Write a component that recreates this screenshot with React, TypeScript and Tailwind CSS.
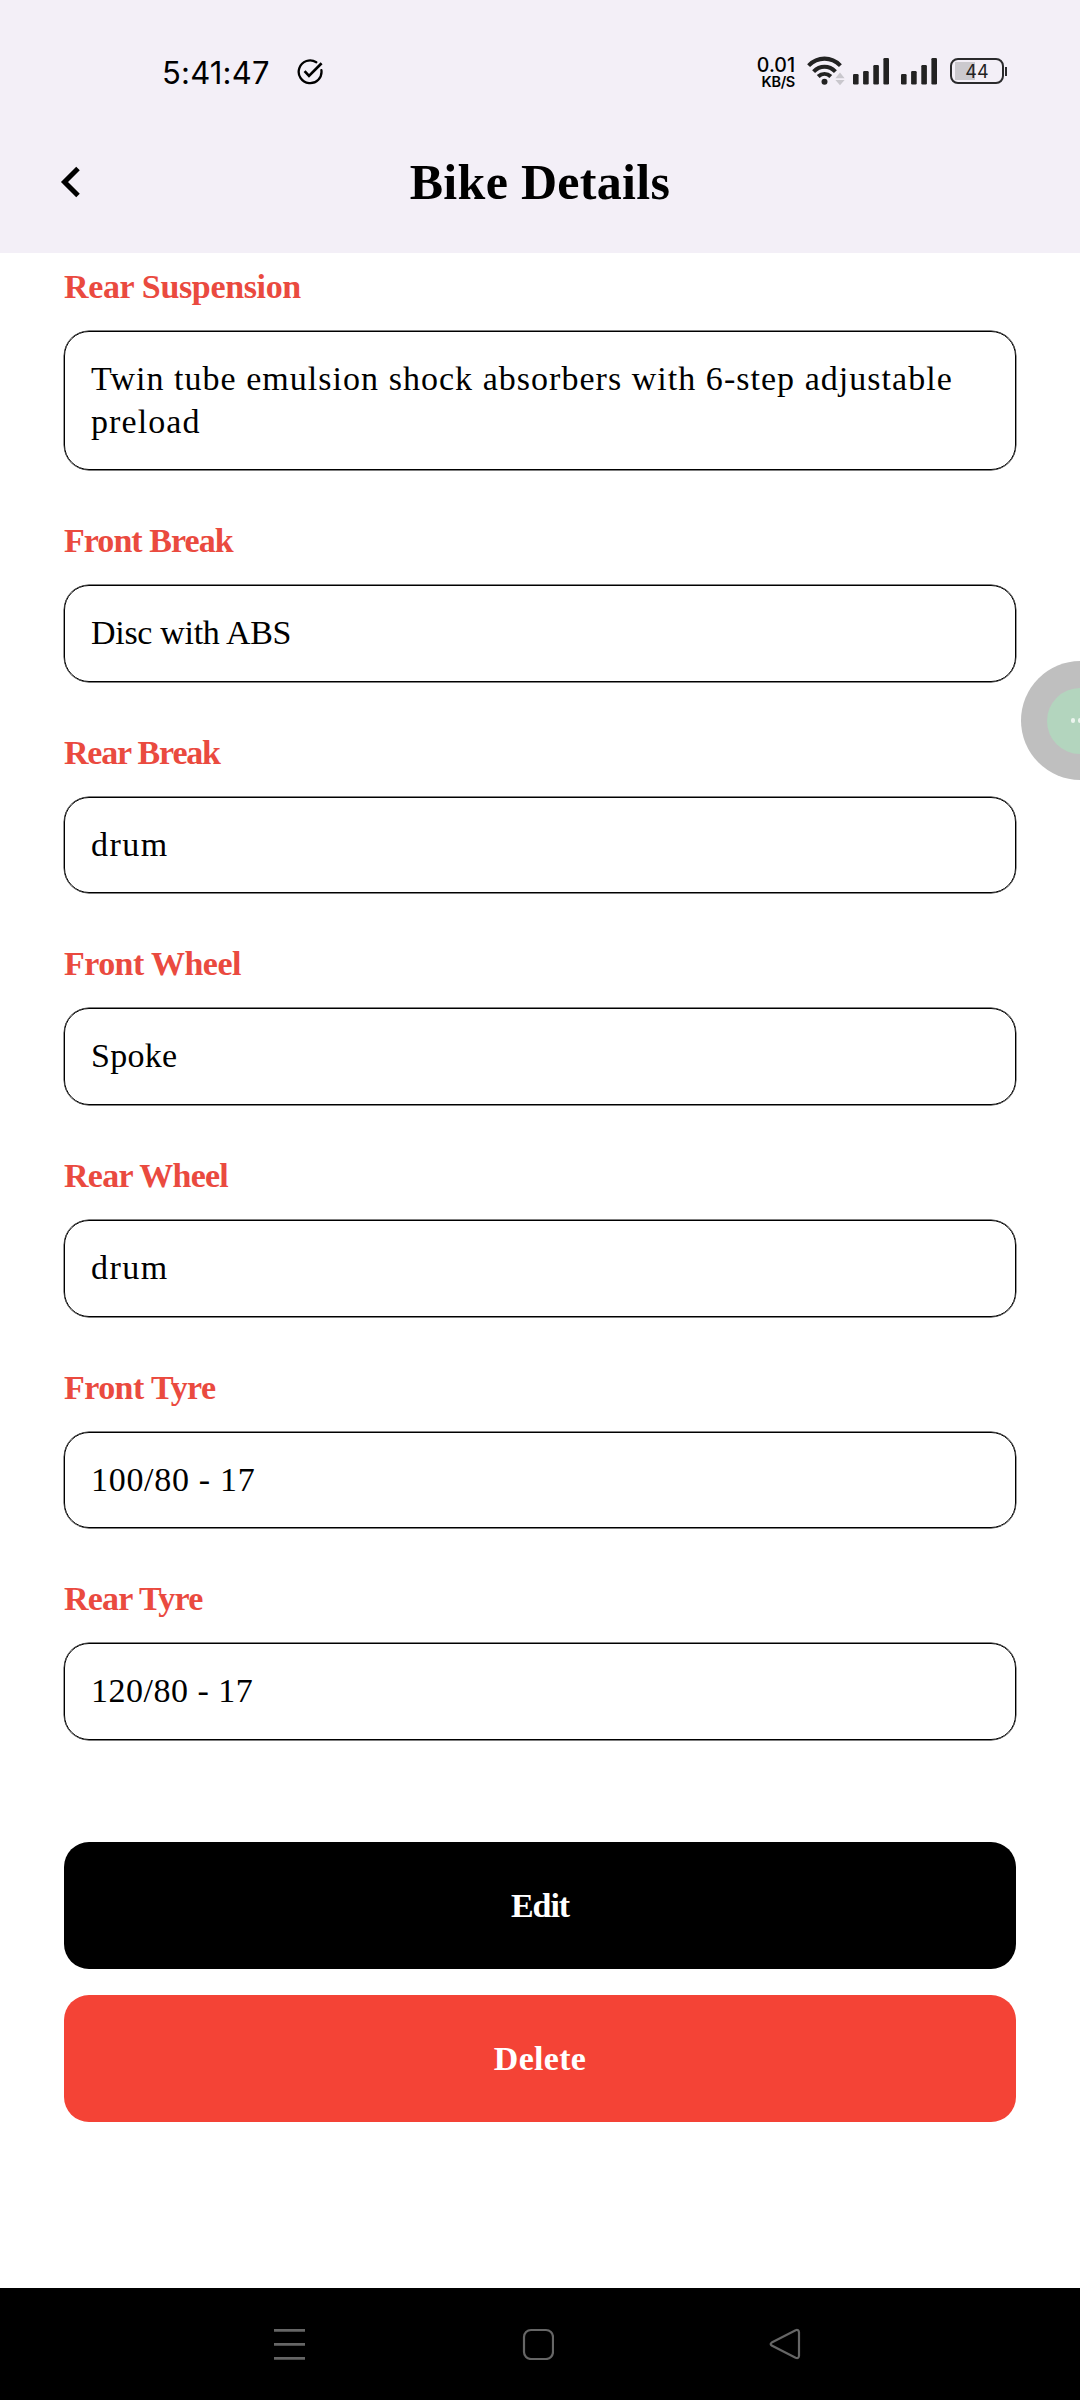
type Line = { text: string; tracking: string };
type Field = { label: string; labelTracking: string; lines: Line[] };

const fields: Field[] = [
  {
    label: 'Rear Suspension',
    labelTracking: 'tracking-[-0.35px]',
    lines: [
      { text: 'Twin tube emulsion shock absorbers with 6-step adjustable', tracking: 'tracking-[1.03px]' },
      { text: 'preload', tracking: 'tracking-[1.1px]' },
    ],
  },
  { label: 'Front Break', labelTracking: 'tracking-[-0.95px]', lines: [{ text: 'Disc with ABS', tracking: 'tracking-[-0.3px]' }] },
  { label: 'Rear Break', labelTracking: 'tracking-[-1.2px]', lines: [{ text: 'drum', tracking: 'tracking-[1.5px]' }] },
  { label: 'Front Wheel', labelTracking: 'tracking-[-0.55px]', lines: [{ text: 'Spoke', tracking: 'tracking-[0.3px]' }] },
  { label: 'Rear Wheel', labelTracking: 'tracking-[-0.75px]', lines: [{ text: 'drum', tracking: 'tracking-[1.5px]' }] },
  { label: 'Front Tyre', labelTracking: 'tracking-[-0.55px]', lines: [{ text: '100/80 - 17', tracking: 'tracking-[0.7px]' }] },
  { label: 'Rear Tyre', labelTracking: 'tracking-[-0.8px]', lines: [{ text: '120/80 - 17', tracking: 'tracking-[0.5px]' }] },
];

function CheckIcon() {
  return (
    <svg className="ml-[27px] h-[28px] w-[28px]" viewBox="0 0 28 28" fill="none" stroke="#000" strokeWidth="2.3" strokeLinecap="round">
      <path d="M20.3 4.2A11.4 11.4 0 1 0 25.4 12.2" />
      <path d="M8.6 13.2l4.4 4.7L25.6 5.2" strokeWidth="2.7" strokeLinecap="butt" />
    </svg>
  );
}

function WifiIcon() {
  return (
    <svg className="ml-[12px] h-[30px] w-[38px]" viewBox="0 0 38 30" fill="none">
      <g stroke="#222" strokeWidth="4.1">
        <path d="M1.6 9.6C10.8 0.3 24.2 0.3 33.4 9.6" />
        <path d="M6.6 15.6C13 9.1 22 9.1 28.4 15.6" />
        <path d="M11.2 20.6C14.9 17.1 20.1 17.1 23.8 20.6" />
      </g>
      <circle cx="17.5" cy="25.8" r="3" fill="#222" />
      <path d="M28.4 22.2l4.6-5.6 4.6 5.6zM28.4 24l4.6 5.2 4.6-5.2z" fill="#c9c7cd" />
    </svg>
  );
}

function SignalIcon() {
  return (
    <svg className="h-[28px] w-[36px]" viewBox="0 0 36 28" fill="#222">
      <rect x="0" y="17" width="5.6" height="10.5" rx="1.2" />
      <rect x="10.1" y="14" width="5.6" height="13.5" rx="1.2" />
      <rect x="20.3" y="8" width="5.6" height="19.5" rx="1.2" />
      <rect x="30.4" y="1" width="5.6" height="26.5" rx="1.2" />
    </svg>
  );
}

function Battery() {
  return (
    <div className="ml-[13px] flex items-center gap-px">
      <div className="flex h-[26px] w-[54px] items-center justify-center rounded-[8px] border-2 border-[#2a2a2c] bg-[linear-gradient(90deg,#cbc9ce_20px,transparent_20px)] bg-[length:44px_18px] bg-[position:3px_2px] bg-no-repeat pt-0.5 font-['Inter'] text-[18px] leading-none text-[#222]">
        44
      </div>
      <div className="h-[9px] w-[2px] bg-[#2a2a2c]" />
    </div>
  );
}

function StatusBar() {
  return (
    <div className="flex h-[142px] items-start pl-[162px]">
      <div className="flex h-[144px] items-center">
        <span className="w-[107px] whitespace-nowrap font-['Inter'] text-[31px] leading-none tracking-[0.2px]">5:41:47</span>
        <CheckIcon />
      </div>
      <div className="ml-auto mr-[73px] flex h-[142px] items-center">
        <div className="flex flex-col items-end pt-0.5 font-['Inter']">
          <span className="text-[19.5px] font-medium leading-[20px]">0.01</span>
          <span className="text-[14.5px] font-semibold leading-[14px] tracking-[-0.3px]">KB/S</span>
        </div>
        <WifiIcon />
        <div className="ml-[8px] flex gap-[12px]">
          <SignalIcon />
          <SignalIcon />
        </div>
        <Battery />
      </div>
    </div>
  );
}

function FieldCard({ field }: { field: Field }) {
  return (
    <section className="flex flex-col gap-6">
      <h2 className={`text-[34px] font-bold leading-[40px] text-[#ea4a3f] ${field.labelTracking}`}>{field.label}</h2>
      <div className="rounded-[25px] border border-black px-[26px] py-[26px] text-[34px] leading-[42.6px] shadow-[0_0_0_0.4px_#000]">
        {field.lines.map((line) => (
          <p key={line.text} className={`whitespace-nowrap ${line.tracking}`}>
            {line.text}
          </p>
        ))}
      </div>
    </section>
  );
}

export default function App() {
  return (
    <div className="relative flex h-[2400px] w-[1080px] flex-col overflow-hidden bg-white font-['Liberation_Serif',serif] text-black">
      <header className="h-[253px] shrink-0 bg-[#f3eff7]">
        <StatusBar />
        <div className="grid h-[79px] grid-cols-[140px_1fr_140px] items-center">
          <svg className="ml-[58px] h-[34px] w-[26px]" viewBox="0 0 26 34" fill="none" stroke="#000" strokeWidth="5">
            <path d="M20 3.5L6.5 17L20 30.5" />
          </svg>
          <h1 className="text-center text-[50px] font-bold leading-[56px] tracking-[0.3px]">Bike Details</h1>
        </div>
      </header>

      <main className="flex flex-1 flex-col px-16 pt-[14px]">
        <div className="flex flex-col gap-[51px]">
          {fields.map((field) => (
            <FieldCard key={field.label} field={field} />
          ))}
        </div>
        <div className="mt-[102px] flex flex-col gap-[26px] text-[34px] font-bold text-white">
          <button className="h-[127px] rounded-[25px] bg-black tracking-[-1.1px]">Edit</button>
          <button className="h-[127px] rounded-[25px] bg-[#f44336] tracking-[0.3px]">Delete</button>
        </div>
      </main>

      <nav className="flex h-[112px] shrink-0 items-center bg-black pl-[273px]">
        <svg className="h-8 w-8" viewBox="0 0 32 32" stroke="#666" strokeWidth="2.8">
          <path d="M1 2.3h31M1 16.3h31M1 30.3h31" />
        </svg>
        <svg className="ml-[217px] h-8 w-8" viewBox="0 0 32 32" fill="none" stroke="#666" strokeWidth="2.2">
          <rect x="2" y="2" width="29" height="29" rx="7" />
        </svg>
        <svg className="ml-[215px] h-8 w-8" viewBox="0 0 32 32" fill="none" stroke="#666" strokeWidth="2.2">
          <path d="M2.7 14.6L26.6 2.2Q29.8 1.2 30 4.4V27.8Q29.8 31 26.6 29.8L2.7 17.6Q0.6 16.1 2.7 14.6Z" />
        </svg>
      </nav>

      <div className="absolute left-[1020.5px] top-[661px] flex size-[119px] items-center justify-center rounded-full bg-[#bfbfbf]">
        <div className="flex size-[66px] items-center justify-center gap-[2.5px] rounded-full bg-[#b3d5be]">
          <span className="size-[4.5px] rounded-full bg-[#edf5ef]" />
          <span className="size-[4.5px] rounded-full bg-[#edf5ef]" />
          <span className="size-[4.5px] rounded-full bg-[#edf5ef]" />
        </div>
      </div>
    </div>
  );
}
